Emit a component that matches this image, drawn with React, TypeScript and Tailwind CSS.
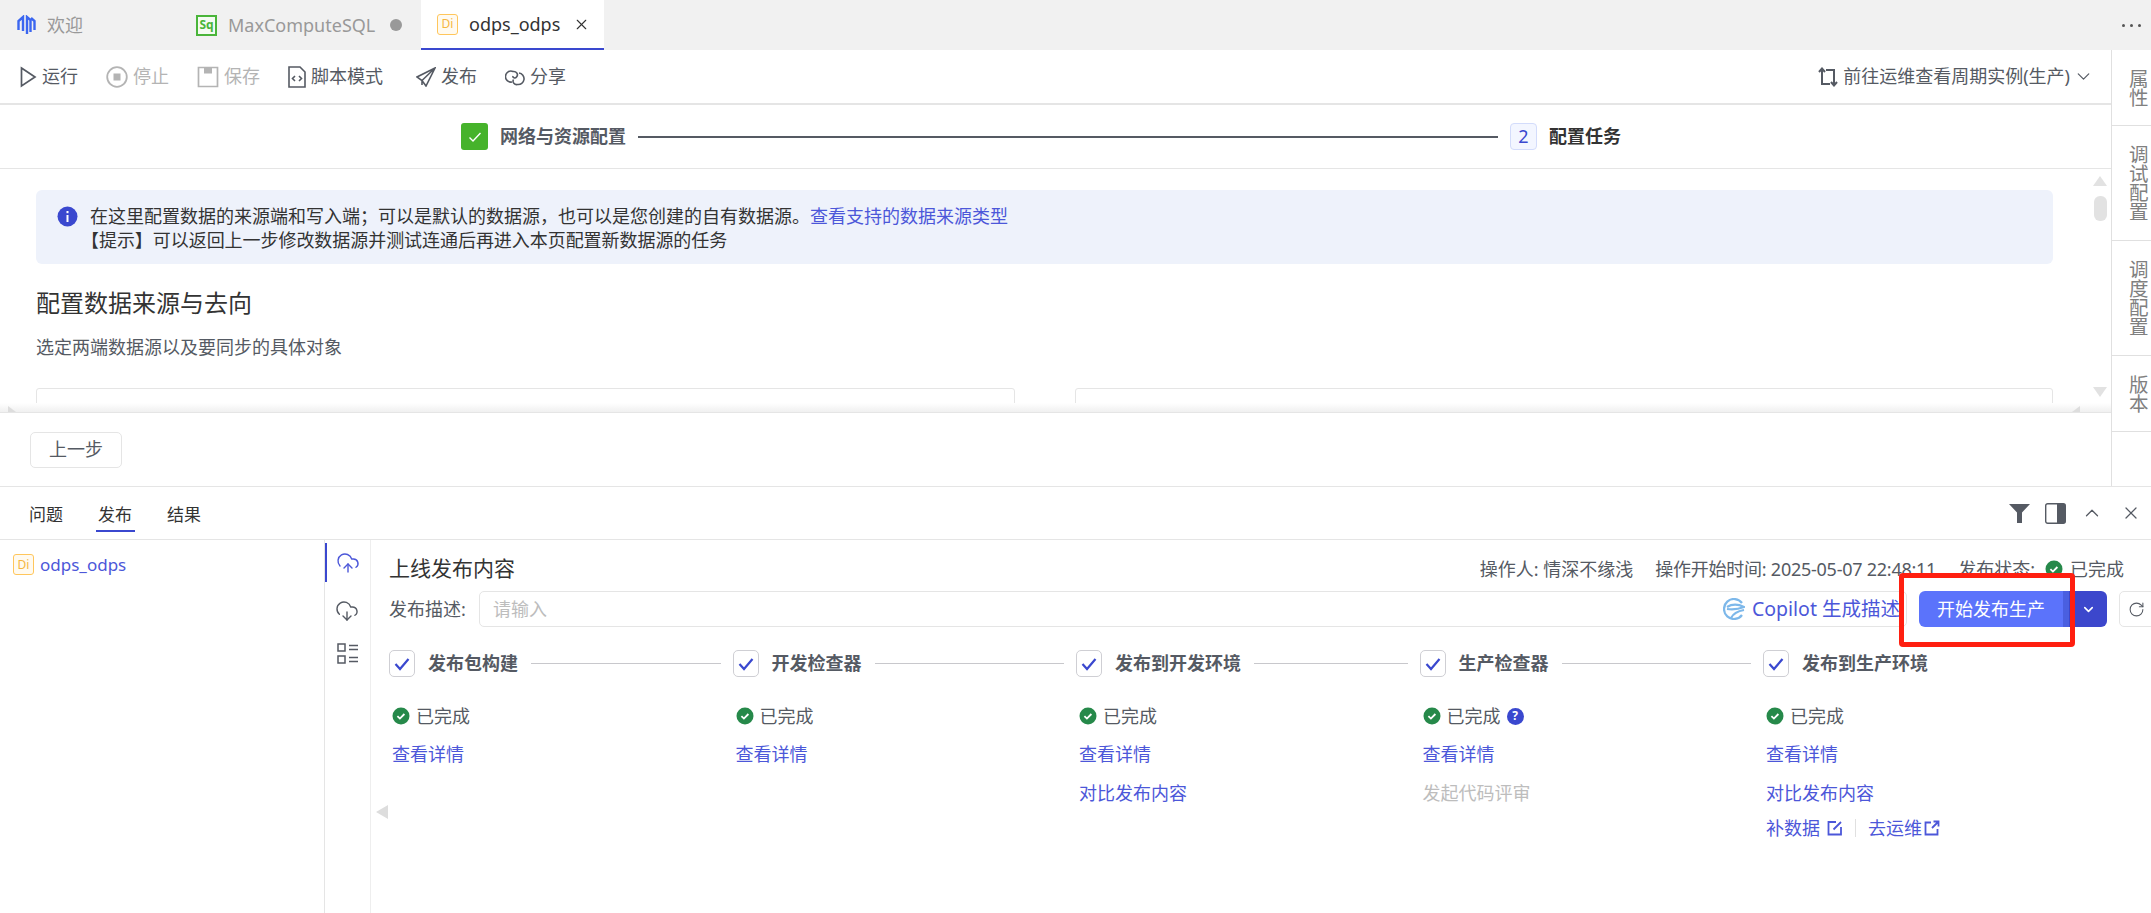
import React from 'react';
import { ChevronDown, ChevronUp, CloudDownload, CloudUpload, RotateCw, X } from 'lucide-react';

const DiBadge = () => (
  <span className="flex h-[21px] w-[21px] shrink-0 items-center justify-center rounded-[3px] border border-[#ffc65c] bg-[#fffaf0] text-[12px] leading-none text-[#f5b63f]">
    Di
  </span>
);

const DoneIcon = ({ className = '' }: { className?: string }) => (
  <svg viewBox="0 0 18 18" className={`h-[18px] w-[18px] shrink-0 ${className}`}>
    <circle cx="9" cy="9" r="8.5" fill="#26894a" />
    <path d="M5.4 9.2l2.5 2.4 4.5-4.6" fill="none" stroke="#fff" strokeWidth="1.8" />
  </svg>
);

const ToolItem = ({ icon, label, disabled, className = '' }: { icon: React.ReactNode; label: string; disabled?: boolean; className?: string }) => (
  <div className={`flex items-center gap-[5px] ${disabled ? 'text-[#b4b4b4]' : 'text-[#555a63]'} ${className}`}>
    {icon}
    <span>{label}</span>
  </div>
);

const steps = [
  { title: '发布包构建', links: ['查看详情'] },
  { title: '开发检查器', links: ['查看详情'] },
  { title: '发布到开发环境', links: ['查看详情', '对比发布内容'] },
  { title: '生产检查器', links: ['查看详情'], help: true, muted: '发起代码评审' },
  { title: '发布到生产环境', links: ['查看详情', '对比发布内容'], last: true },
];

const railItems = [
  { label: '属性', h: 'h-[76px]' },
  { label: '调试配置', h: 'h-[115px]' },
  { label: '调度配置', h: 'h-[115px]' },
  { label: '版本', h: 'h-[76px]' },
];

export default function App() {
  return (
    <div className="relative flex h-[913px] w-[2151px] flex-col overflow-hidden bg-white font-['Noto_Sans','Noto_Sans_CJK_SC',sans-serif] text-[18px] text-[#555a63]">
      {/* editor tabs */}
      <div className="flex h-[50px] shrink-0 items-stretch bg-[#f1f1f1]">
        <div className="flex w-[196px] items-center gap-[11px] pl-[17px] text-[#999]">
          <svg viewBox="0 0 19 20" className="h-[20px] w-[19px]" fill="none" stroke="#3b66f0" strokeWidth="2.400">
            <path d="M1.500 15V6L6 2v14M10 19V2l3.500 3v12M17.500 15V6L14 3" />
          </svg>
          <span>欢迎</span>
        </div>
        <div className="flex w-[225px] items-center text-[#999]">
          <span className="flex h-[21px] w-[21px] shrink-0 items-center justify-center border-2 border-[#4ab53a] bg-[#f4fbf2] text-[12px] font-bold leading-none text-[#4ab53a]">Sq</span>
          <span className="ml-[11px]">MaxComputeSQL</span>
          <span className="ml-[15px] h-[12px] w-[12px] rounded-full bg-[#999]" />
        </div>
        <div className="flex w-[183px] items-center border-b-2 border-[#3a48cf] bg-white pl-[16px] text-[#333]">
          <DiBadge />
          <span className="ml-[11px]">odps_odps</span>
          <X className="ml-[13px] h-[17px] w-[17px]" strokeWidth={1.6} />
        </div>
        <div className="ml-auto flex items-center gap-[5px] pr-[10px]">
          <span className="h-[3px] w-[3px] rounded-full bg-[#555]" />
          <span className="h-[3px] w-[3px] rounded-full bg-[#555]" />
          <span className="h-[3px] w-[3px] rounded-full bg-[#555]" />
        </div>
      </div>

      {/* upper area */}
      <div className="flex h-[437px] shrink-0 border-b border-[#e5e5e5]">
        <div className="flex w-[2112px] shrink-0 flex-col border-r border-[#e0e0e0]">
          {/* toolbar */}
          <div className="flex h-[55px] shrink-0 items-center border-b-[2px] border-[#e5e5e5] pl-[20px] pr-[17px]">
            <div className="flex items-center gap-[28px]">
              <ToolItem
                label="运行"
                icon={
                  <svg viewBox="0 0 17 22" className="h-[22px] w-[17px]" fill="none" stroke="currentColor" strokeWidth="1.7">
                    <path d="M1.500 2l13.500 9-13.500 9z" />
                  </svg>
                }
              />
              <ToolItem
                disabled
                label="停止"
                icon={
                  <svg viewBox="0 0 22 22" className="h-[22px] w-[22px]" fill="none" stroke="currentColor" strokeWidth="1.800">
                    <circle cx="11" cy="11" r="9.800" />
                    <rect x="7.500" y="7.500" width="7" height="7" fill="currentColor" stroke="none" />
                  </svg>
                }
              />
              <ToolItem
                disabled
                label="保存"
                icon={
                  <svg viewBox="0 0 22 22" className="h-[22px] w-[22px]" fill="none" stroke="currentColor" strokeWidth="1.700">
                    <path d="M1.500 1.500h19v19h-19z" />
                    <rect x="7" y="1.500" width="8" height="6" fill="currentColor" stroke="none" />
                  </svg>
                }
              />
              <ToolItem
                label="脚本模式"
                icon={
                  <svg viewBox="0 0 18 22" className="h-[22px] w-[18px]" fill="none" stroke="currentColor" strokeWidth="1.600">
                    <path d="M1 1h11l5 5v15H1z" />
                    <path d="M7 10l-2.500 2.500L7 15M11 10l2.500 2.500L11 15" />
                  </svg>
                }
              />
              <ToolItem
                className="ml-[5px]"
                label="发布"
                icon={
                  <svg viewBox="0 0 20 20" className="h-[20px] w-[20px]" fill="none" stroke="currentColor" strokeWidth="1.600">
                    <path d="M19 1L1 10l5 3.500L10 19zM19 1L6 13.500V18" />
                  </svg>
                }
              />
              <ToolItem
                label="分享"
                icon={
                  <svg viewBox="0 0 20 18" className="h-[18px] w-[20px]" fill="none" stroke="currentColor" strokeWidth="1.600">
                    <path d="M7 14A5.500 5.500 0 1 1 8 3.500C11 3 14 6 11.500 9 10 11 7.500 9.500 8 8" />
                    <path d="M14 5a5.500 5.500 0 0 1-1.500 11.500C9.500 17 7 14.500 8.500 11.500" />
                  </svg>
                }
              />
            </div>
            <div className="ml-auto flex items-center">
              <svg viewBox="0 0 20 20" className="h-[20px] w-[20px]" fill="none" stroke="currentColor" strokeWidth="2">
                <path d="M1 5l3-3.500L7 5M4 2v15h8M19 15l-3 3.500-3-3.500M16 18V3H8" />
              </svg>
              <span className="ml-[5px]">前往运维查看周期实例(生产)</span>
              <ChevronDown className="ml-[3px] h-[21px] w-[21px]" strokeWidth={1.400} />
            </div>
          </div>

          {/* stepper */}
          <div className="flex h-[64px] shrink-0 items-center border-b border-[#e5e5e5] pl-[461px] pr-[490px]">
            <span className="flex h-[27px] w-[27px] shrink-0 items-center justify-center rounded-[3px] bg-[#46b32b]">
              <svg viewBox="0 0 16 16" className="h-[16px] w-[16px]" fill="none" stroke="#fff" strokeWidth="1.400">
                <path d="M2.500 8.500l3.500 3.500 7.500-8" />
              </svg>
            </span>
            <span className="ml-[12px] shrink-0 font-bold text-[#555a63]">网络与资源配置</span>
            <div className="mx-[12px] h-[2px] flex-1 bg-[#555a63]" />
            <span className="flex h-[27px] w-[27px] shrink-0 items-center justify-center rounded-[4px] border border-[#d3dcfb] bg-[#f3f6ff] text-[#3a48cf]">2</span>
            <span className="ml-[12px] shrink-0 font-bold text-[#333]">配置任务</span>
          </div>

          {/* scroll body */}
          <div className="relative h-[244px] shrink-0 overflow-hidden border-b border-[#e5e5e5] px-[36px] pt-[21px]">
            <div className="w-[2017px] rounded-[6px] bg-[#eef2fb] pb-[12px] pl-[21px] pt-[14px] leading-[24px] text-[#333]">
              <div className="flex items-center">
                <svg viewBox="0 0 21 21" className="h-[21px] w-[21px] shrink-0">
                  <circle cx="10.500" cy="10.500" r="10" fill="#3a48cf" />
                  <rect x="9.500" y="9" width="2" height="7" fill="#fff" />
                  <rect x="9.500" y="5" width="2" height="2.200" fill="#fff" />
                </svg>
                <span className="ml-[12px]">
                  在这里配置数据的来源端和写入端；可以是默认的数据源，也可以是您创建的自有数据源。
                  <span className="text-[#4c57d9]">查看支持的数据来源类型</span>
                </span>
              </div>
              <div className="pl-[24px] tracking-[-0.05px]">【提示】可以返回上一步修改数据源并测试连通后再进入本页配置新数据源的任务</div>
            </div>
            <h2 className="mt-[22px] text-[24px] leading-[34px] text-[#333]">配置数据来源与去向</h2>
            <p className="mt-[15px] leading-[24px] text-[#555a63]">选定两端数据源以及要同步的具体对象</p>
            <div className="mt-[29px] flex gap-[60px]">
              <div className="h-[40px] w-[979px] rounded-t-[3px] border border-[#e5e5e5]" />
              <div className="h-[40px] w-[978px] rounded-t-[3px] border border-[#e5e5e5]" />
            </div>
            {/* fade shadow, scrollbar arrows */}
            <div className="absolute inset-x-0 bottom-0 h-[9px] bg-gradient-to-b from-white to-[#f0f0f0]" />
            <div className="absolute bottom-0 left-[8px] h-0 w-0 border-b-[6px] border-r-[8px] border-b-[#ddd] border-r-transparent" />
            <div className="absolute bottom-0 left-[2072px] h-0 w-0 border-b-[6px] border-l-[8px] border-b-[#ddd] border-l-transparent" />
            <div className="absolute left-[2093px] top-[7px] h-0 w-0 border-x-[7.500px] border-b-[10px] border-x-transparent border-b-[#e2e2e2]" />
            <div className="absolute left-[2094px] top-[27px] h-[25px] w-[13px] rounded-[6px] bg-[#e2e2e2]" />
            <div className="absolute left-[2093px] top-[218px] h-0 w-0 border-x-[7.500px] border-t-[10px] border-x-transparent border-t-[#e2e2e2]" />
          </div>

          {/* footer */}
          <div className="flex flex-1 items-center pl-[30px]">
            <button className="h-[36px] w-[92px] rounded-[5px] border border-[#e5e5e5] text-[#555a63]">上一步</button>
          </div>
        </div>

        {/* right rail */}
        <div className="flex-1">
          {railItems.map((item) => (
            <div key={item.label} className={`flex ${item.h} items-center border-b border-[#e0e0e0] pl-[17px] text-[#808080]`}>
              <div className="w-[20px] break-all text-[19.500px] leading-[19px]">{item.label}</div>
            </div>
          ))}
        </div>
      </div>

      {/* bottom panel */}
      <div className="flex h-[53px] shrink-0 items-center border-b border-[#e5e5e5] pl-[29px] pr-[10px] pt-[3px] text-[17px] text-[#333]">
        <span>问题</span>
        <span className="relative ml-[35px] text-[#333]">
          发布
          <span className="absolute -left-[2px] -right-[3px] top-[28px] h-[2px] bg-[#3a48cf]" />
        </span>
        <span className="ml-[35px]">结果</span>
        <div className="-mt-[3px] ml-auto flex items-center text-[#555a63]">
          <svg viewBox="0 0 21 19" className="h-[19px] w-[21px]" fill="currentColor">
            <path d="M0 0h21l-8 8.500V19H8V8.500z" />
          </svg>
          <svg viewBox="0 0 21 21" className="ml-[15px] h-[21px] w-[21px]">
            <rect x="0.700" y="0.700" width="19.600" height="19.600" rx="2" fill="#fff" stroke="#555a63" strokeWidth="1.400" />
            <rect x="12" y="1" width="8" height="19" fill="#555a63" />
          </svg>
          <ChevronUp className="ml-[15px] h-[22px] w-[22px]" strokeWidth={1.400} />
          <X className="ml-[18px] h-[20px] w-[20px]" strokeWidth={1.500} />
        </div>
      </div>

      <div className="flex min-h-0 flex-1">
        {/* file tree */}
        <div className="flex w-[325px] shrink-0 items-start border-r border-[#e5e5e5] pl-[13px] pt-[14px] text-[#4c57d9]">
          <DiBadge />
          <span className="ml-[6px] text-[17px] leading-[21px]">odps_odps</span>
        </div>

        {/* icon rail */}
        <div className="flex w-[46px] shrink-0 flex-col items-center border-r border-[#eeeeee] pt-[3px]">
          <div className="flex h-[39px] w-full items-center justify-center border-l-2 border-[#3a48cf] pr-[2px] text-[#4c57d9]">
            <CloudUpload className="h-[24px] w-[24px]" strokeWidth={1.400} />
          </div>
          <CloudDownload className="mt-[17px] mr-[1px] h-[24px] w-[24px]" strokeWidth={1.400} />
          <svg viewBox="0 0 22 21" className="mt-[20px] h-[21px] w-[22px]" fill="none" stroke="currentColor" strokeWidth="1.500">
            <rect x="1" y="1" width="7" height="7" />
            <rect x="1" y="13" width="7" height="7" />
            <path d="M12 2.500h9M12 6.500h9M12 14.500h9M12 18.500h9" />
          </svg>
        </div>

        {/* publish content */}
        <div className="relative min-w-0 flex-1 pl-[18px] pt-[13px]">
          <div className="flex h-[32px] items-center pr-[27px]">
            <span className="text-[21px] text-[#333]">上线发布内容</span>
            <div className="ml-auto flex items-center">
              <span>操作人: 情深不缘浅</span>
              <span className="ml-[22px] tracking-[-0.25px]">操作开始时间: 2025-05-07 22:48:11</span>
              <span className="ml-[22px]">发布状态:</span>
              <DoneIcon className="ml-[10px]" />
              <span className="ml-[7px]">已完成</span>
            </div>
          </div>

          <div className="mt-[6px] flex h-[36px] items-center">
            <span className="w-[90px] shrink-0">发布描述:</span>
            <div className="flex h-[36px] w-[1428px] shrink-0 items-center rounded-[5px] border border-[#e5e5e5] pl-[13px] pr-[6px]">
              <span className="text-[#bdbdbd]">请输入</span>
              <div className="ml-auto flex items-center text-[19.500px] text-[#4c57d9]">
                <svg viewBox="0 0 22 22" className="mr-[7px] h-[22px] w-[22px]" fill="none" stroke="#7db8ea" strokeWidth="2.200">
                  <path d="M19 5a10 10 0 1 0 0 12M4 9c5-3 11-3 17 0-5 2-11 3-17 2M8 20c2-4 7-7 13-8" />
                </svg>
                Copilot 生成描述
              </div>
            </div>
            <div className="ml-[12px] flex h-[36px] w-[188px] shrink-0 overflow-hidden rounded-[6px] text-white">
              <div className="flex w-[144px] items-center justify-center bg-[#5b73fb]">开始发布生产</div>
              <div className="w-[6px] bg-[#4a5fe0]" />
              <div className="flex flex-1 items-center justify-center bg-[#3c47cc]">
                <ChevronDown className="h-[15px] w-[15px]" strokeWidth={2.500} />
              </div>
            </div>
            <div className="ml-[12px] flex h-[36px] w-[40px] shrink-0 items-center rounded-[5px] border border-[#e5e5e5] pl-[8px]">
              <RotateCw className="h-[17px] w-[17px]" strokeWidth={1.500} />
            </div>
          </div>

          {/* steps */}
          <div className="mt-[23px] flex">
            {steps.map((step, i) => (
              <div key={step.title} className="w-[343.500px] shrink-0">
                <div className="flex h-[27px] items-center">
                  <span className="flex h-[27px] w-[26px] shrink-0 items-center justify-center rounded-[5px] border border-[#cfcfd4]">
                    <svg viewBox="0 0 16 14" className="h-[14px] w-[16px]" fill="none" stroke="#3a48cf" strokeWidth="2.200">
                      <path d="M1.500 7l4.500 5 8.500-10" />
                    </svg>
                  </span>
                  <span className="ml-[13px] shrink-0 font-bold">{step.title}</span>
                  {i < 4 && <div className="ml-[13px] mr-[12px] h-px flex-1 bg-[#c8c8cc]" />}
                </div>
                <div className="mt-[29px] flex h-[20px] items-center pl-[3px]">
                  <DoneIcon />
                  <span className="ml-[6px]">已完成</span>
                  {step.help && (
                    <span className="ml-[6px] flex h-[17px] w-[17px] items-center justify-center rounded-full bg-[#3a48cf] text-[12px] font-bold leading-none text-white">?</span>
                  )}
                </div>
                <div className="mt-[16px] flex flex-col gap-[15px] pl-[3px] leading-[24px] text-[#4c57d9]">
                  {step.links.map((link) => (
                    <span key={link}>{link}</span>
                  ))}
                  {step.muted && <span className="text-[#bdbdbd]">{step.muted}</span>}
                  {step.last && (
                    <div className="-mt-[4px] flex items-center">
                      <span>补数据</span>
                      <svg viewBox="0 0 16 16" className="ml-[7px] h-[16px] w-[16px]" fill="none" stroke="currentColor" strokeWidth="1.800">
                        <path d="M9 2H1.500v12.500H14V7M6.500 9.500L14 2" />
                      </svg>
                      <span className="mx-[12px] h-[18px] w-px bg-[#e0e0e0]" />
                      <span>去运维</span>
                      <svg viewBox="0 0 16 16" className="ml-[2px] h-[16px] w-[16px]" fill="none" stroke="currentColor" strokeWidth="1.800">
                        <path d="M7 2.500H1.500V14.500H13.500V9M8 8l6-6M9.500 1.500h5v5" />
                      </svg>
                    </div>
                  )}
                </div>
              </div>
            ))}
          </div>

          <div className="absolute left-[5px] top-[265px] h-0 w-0 border-y-[7px] border-r-[12px] border-y-transparent border-r-[#dddddd]" />
        </div>
      </div>

      {/* red annotation rectangle from the screenshot */}
      <div className="absolute left-[1899px] top-[573px] h-[74px] w-[176px] rounded-[4px] border-[5px] border-[#ff1f10]" />
    </div>
  );
}
